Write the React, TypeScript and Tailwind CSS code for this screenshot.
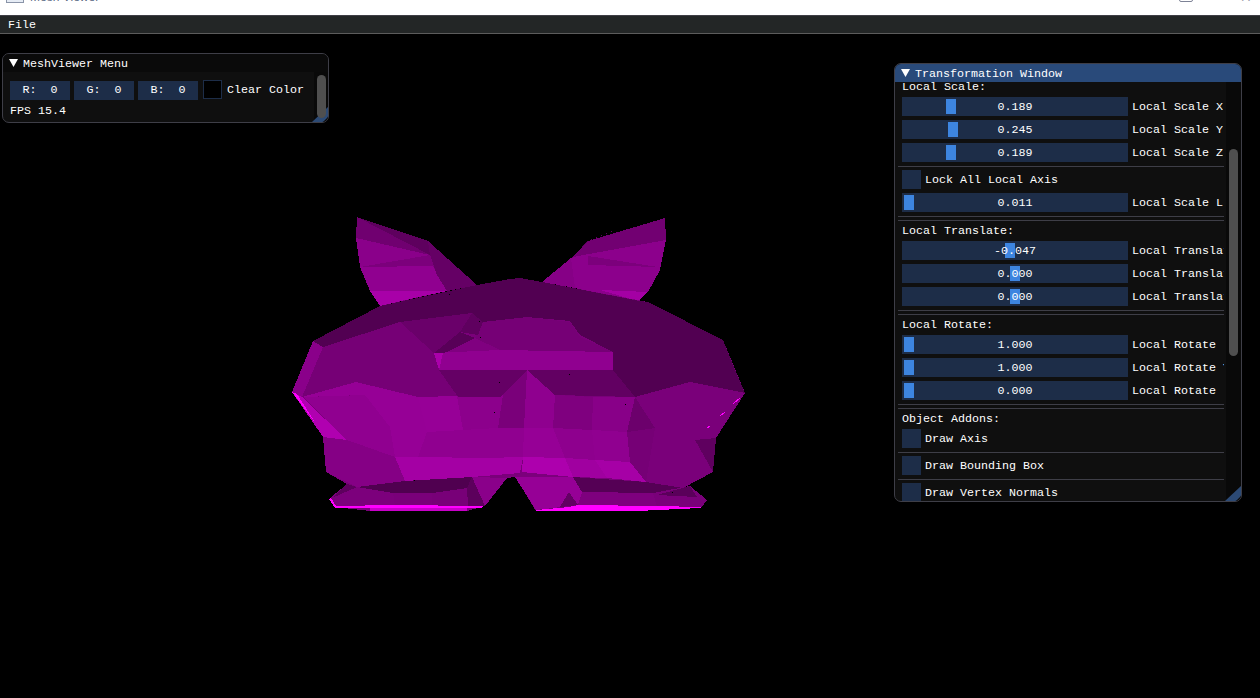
const FONT = "font-['Liberation_Mono',monospace] text-[11.67px] leading-[13px] text-white whitespace-pre translate-y-px";

// flat shaded faces of the mesh, painted back to front. coords are page pixels
const faces: [string, string][] = [
  // ears
  ["#7c007c", "357,217 428,241 477,285 447,291 380,306 370,291 360,267 356,238"],
  ["#5e005e", "357,217 428,241 430,255"],
  ["#700070", "357,217 430,255 356,238"],
  ["#8a008a", "356,238 430,255 360,267"],
  ["#7c007c", "360,267 430,255 433,266"],
  ["#900090", "360,267 433,266 447,291 370,291"],
  ["#a800a8", "370,291 447,291 414,298 380,306"],
  ["#650065", "428,241 477,285 447,291 437,275 430,255"],
  ["#8c008c", "665,218 666,240 660,270 648,292 638,301 575,288 571,258"],
  ["#720072", "665,218 588,241 571,258 578,256 666,240"],
  ["#5e005e", "640,220 588,241 573,255 590,240"],
  ["#7c007c", "588,256 658,267 588,265"],
  ["#a400a4", "600,290 648,292 638,301"],
  ["#860086", "571,258 575,288 542,282"],
  // whole body outline, so no gap between faces shows black
  ["#7a007a", "313,341 380,306 477,285 520,278 542,282 648,302 723,340 745,393 716,438 713,472 683,488 690,486 707,500 701,508 637,511 536,511 522,488 515,477 507,478 485,506 467,511 370,511 335,507 330,498 347,484 326,472 323,437 292,392"],
  // body
  ["#8a008a", "313,341 323,347 302,397 292,392"],
  ["#760076", "323,347 400,322 435,353 440,370 457,396 418,397 356,382 302,397"],
  ["#6a006a", "400,322 472,313 460,332 434,353"],
  ["#960096", "302,397 356,382 418,397 427,432 418,457 395,457 390,427 365,395"],
  ["#b000b0", "292,392 302,397 347,440 323,437"],
  ["#900090", "303,397 365,395 390,427 395,457 347,440"],
  ["#850085", "323,437 347,440 395,457 405,481 357,487 326,472"],
  ["#970097", "418,397 457,396 463,430 427,432"],
  ["#8c008c", "457,396 503,395 498,428 463,430"],
  ["#900090", "427,432 498,428 524,428 523,457 485,458 418,457"],
  ["#a400a4", "395,457 418,457 485,458 523,457 520,473 472,477 405,481"],
  ["#650065", "439,370 527,370 500,397 458,397"],
  ["#7a007a", "503,395 527,370 524,428 498,428"],
  ["#8f008f", "527,370 555,395 553,428 524,428"],
  ["#7f007f", "555,395 593,397 592,430 553,428"],
  ["#880088", "593,397 635,397 627,432 592,430"],
  ["#620062", "527,370 613,370 635,397 555,395"],
  ["#960096", "524,428 553,428 565,458 523,457"],
  ["#8e008e", "553,428 592,430 595,460 565,458"],
  ["#900090", "592,430 627,432 630,462 595,460"],
  ["#ad00ad", "523,457 565,458 573,477 522,472"],
  ["#a000a0", "565,458 595,460 607,478 573,477"],
  ["#a600a6", "595,460 630,462 646,482 607,478"],
  ["#7a007a", "635,397 690,382 745,393 716,438 695,440 713,472 683,488 646,482 655,428"],
  ["#6c006c", "635,397 655,428 627,432"],
  ["#760076", "627,432 655,428 646,482 630,462"],
  ["#5f005f", "695,440 716,438 713,472"],
  // top band and the raised plate
  ["#520052", "313,341 380,306 477,285 510,279 520,278 542,282 640,301 648,302 723,340 733,365 745,393 690,382 635,397 613,370 613,352 580,335 570,321 527,317 483,322 472,313 400,322 323,347"],
  ["#760076", "483,322 527,317 570,322 580,337 613,352 500,350 475,338"],
  ["#5f005f", "472,313 483,322 478,335 460,332"],
  ["#580058", "460,332 475,338 445,353 434,353"],
  ["#800080", "475,338 500,350 445,353"],
  ["#900090", "434,353 500,350 613,352 613,370 439,370"],
  ["#aa00aa", "434,353 443,353 439,370"],
  // feet
  ["#500050", "357,487 405,481 472,477 467,488 432,493 393,493"],
  ["#7a007a", "393,493 432,493 432,506 395,506"],
  ["#780078", "432,493 467,488 468,506 432,506"],
  ["#5c005c", "472,477 485,506 468,506 467,488"],
  ["#8a008a", "472,477 507,478 485,506"],
  ["#7c007c", "347,484 357,487 393,493 395,506 335,507 330,498"],
  ["#5e005e", "347,484 357,487 332,498"],
  ["#960096", "515,477 573,477 582,492 578,505 536,510 522,488"],
  ["#7c007c", "515,477 522,472 573,477"],
  ["#550055", "573,477 646,482 683,488 653,493 582,492"],
  ["#7e007e", "582,492 653,493 657,507 578,507"],
  ["#640064", "569,492 578,505 560,507"],
  ["#7a007a", "653,493 690,486 707,500 701,507 657,507"],
  ["#5a005a", "657,495 690,486 697,497"],
  // lit rims
  ["#ff00ff", "292,392 297,394 316,424"],
  ["#ff00ff", "329,499 331,498 336,506 393,505 483,506 482,508 335,508"],
  ["#c800c8", "370,508 467,508 467,511 370,511"],
  ["#ff00ff", "536,510 569,507 578,505 657,506 701,507 701,508 637,511 536,511"],
];

const specks = [[449, 294], [479, 321], [480, 337], [499, 382], [494, 412], [414, 480], [569, 374], [625, 404], [672, 492]];

type SliderProps = { value: string; label: string; grab: number };

const Slider = ({ value, label, grab }: SliderProps) => (
  <div className="flex gap-1 pl-1 h-[19px] shrink-0">
    <div className="relative w-[226px] shrink-0 bg-[#1d2d48]">
      <div className="absolute top-[2px] h-[15px] w-[10px] bg-[#3d85e0]" style={{ left: grab }} />
      <div className={`${FONT} relative text-center leading-[19px]`}>{value}</div>
    </div>
    <div className={`${FONT} leading-[19px] overflow-hidden`}>{label}</div>
  </div>
);

const Check = ({ label }: { label: string }) => (
  <div className="flex gap-1 pl-1 h-[19px] shrink-0">
    <div className="w-[19px] h-[19px] bg-[#1d2d48]" />
    <div className={`${FONT} leading-[19px]`}>{label}</div>
  </div>
);

const Heading = ({ text }: { text: string }) => <div className={`${FONT} pl-1 shrink-0`}>{text}</div>;

const Sep = () => <div className="h-px -mb-px bg-[#3e3e47] shrink-0" />;

const Triangle = () => (
  <svg width="9" height="8" viewBox="0 0 9 8" className="shrink-0">
    <polygon points="0,0 9,0 4.5,8" fill="#fff" />
  </svg>
);

const ResizeGrip = () => (
  <svg width="16" height="15" viewBox="0 0 16 15" className="absolute right-0 bottom-0">
    <polygon points="16,0 16,10 11,15 0,15" fill="#2c4a75" />
  </svg>
);

const ColorField = ({ text }: { text: string }) => (
  <div className={`${FONT} w-[60px] h-[19px] bg-[#1d2d48] text-center leading-[19px]`}>{text}</div>
);

export default function App() {
  return (
    <div className="relative flex flex-col h-[698px] w-[1260px] overflow-hidden bg-black">
      {/* os title bar, mostly cut off by the top of the shot */}
      <div className="flex items-end justify-between h-[15px] bg-white shrink-0 overflow-hidden">
        <div className="flex items-start gap-[6px] pl-[6px] self-start -mt-[10px]">
          <div className="w-[18px] h-[13px] border border-[#8a94a8] bg-[#e6ecf5]" />
          <span className="font-['Liberation_Sans',sans-serif] text-[12px] leading-[14px] text-[#5b6b85]">Mesh Viewer</span>
        </div>
        <div className="flex items-start gap-[47px] pr-[8px] self-start -mt-[9px]">
          <div className="w-[14px] h-[11px] border border-[#7d8296] rounded-[2px]" />
          <span className="font-['Liberation_Sans',sans-serif] text-[14px] leading-[13px] text-[#7d8296]">✕</span>
        </div>
      </div>

      {/* menu bar */}
      <div className="flex items-center h-[19px] pl-2 bg-[#232626] border-t border-t-[#3f3f46] border-b border-b-[#5c5c5c] shrink-0">
        <div className={FONT}>File</div>
      </div>

      {/* viewport */}
      <div className="relative flex-1">
        <svg viewBox="0 34 1260 664" className="absolute inset-0 w-full h-full" shapeRendering="crispEdges">
          {faces.map(([fill, points], i) => (
            <polygon key={i} points={points} fill={fill} />
          ))}
          <path d="M733 404L740 398M720 416L725 412M707 428L710 426" stroke="#ff00ff" />
          {specks.map(([x, y]) => (
            <rect key={x} x={x} y={y} width="1" height="1" fill="#000" />
          ))}
        </svg>

        {/* MeshViewer Menu */}
        <div className="absolute left-[2px] top-[19px] w-[327px] h-[70px] flex flex-col rounded-[7px] border border-[#3e3e47] bg-[#0f0f0f] overflow-hidden">
          <div className="flex items-center gap-[5px] pl-[6px] h-[18px] bg-[#0a0a0a] shrink-0">
            <Triangle />
            <div className={FONT}>MeshViewer Menu</div>
          </div>
          <div className="relative flex flex-1 min-h-0">
            <div className="flex flex-col gap-[5px] flex-1 pl-[7px] pt-[8px]">
              <div className="flex items-center gap-1 h-[19px]">
                <ColorField text="R:  0" />
                <ColorField text="G:  0" />
                <ColorField text="B:  0" />
                <div className="w-[19px] h-[19px] ml-px bg-black border border-[#1d2d48]" />
                <div className={`${FONT} ml-px`}>Clear Color</div>
              </div>
              <div className={FONT}>FPS 15.4</div>
            </div>
            <div className="w-[14px] shrink-0 bg-[#090909] pl-[3px] pt-[3px]">
              <div className="relative z-10 w-[9px] h-[43px] rounded-[5px] bg-[#4f4f4f]" />
            </div>
            <ResizeGrip />
          </div>
        </div>

        {/* Transformation Window */}
        <div className="absolute left-[894px] top-[29px] w-[348px] h-[439px] flex flex-col rounded-[7px] border border-[#3e3e47] bg-[#0f0f0f] overflow-hidden">
          <div className="flex items-center gap-[5px] pl-[6px] h-[18px] bg-[#294a7a] shrink-0">
            <Triangle />
            <div className={FONT}>Transformation Window</div>
          </div>
          <div className="relative flex flex-1 min-h-0">
            <div className="flex flex-col gap-1 w-[326px] ml-[3px] -mt-[2px] overflow-hidden">
              <Heading text="Local Scale:" />
              <Slider value="0.189" label="Local Scale X" grab={44} />
              <Slider value="0.245" label="Local Scale Y" grab={46} />
              <Slider value="0.189" label="Local Scale Z" grab={44} />
              <Sep />
              <Check label="Lock All Local Axis" />
              <Slider value="0.011" label="Local Scale L" grab={2} />
              <Sep />
              <Sep />
              <Heading text="Local Translate:" />
              <Slider value="-0.047" label="Local Translate X" grab={103} />
              <Slider value="0.000" label="Local Translate Y" grab={108} />
              <Slider value="0.000" label="Local Translate Z" grab={108} />
              <Sep />
              <Sep />
              <Heading text="Local Rotate:" />
              <Slider value="1.000" label="Local Rotate" grab={2} />
              <Slider value="1.000" label="Local Rotate Y" grab={2} />
              <Slider value="0.000" label="Local Rotate" grab={2} />
              <Sep />
              <Sep />
              <Heading text="Object Addons:" />
              <Check label="Draw Axis" />
              <Sep />
              <Check label="Draw Bounding Box" />
              <Sep />
              <Check label="Draw Vertex Normals" />
            </div>
            <div className="ml-auto w-[15px] shrink-0 bg-[#090909] pl-[3px] pt-[67px]">
              <div className="relative z-10 w-[9px] h-[207px] rounded-[5px] bg-[#4f4f4f]" />
            </div>
            <ResizeGrip />
          </div>
        </div>
      </div>
    </div>
  );
}
